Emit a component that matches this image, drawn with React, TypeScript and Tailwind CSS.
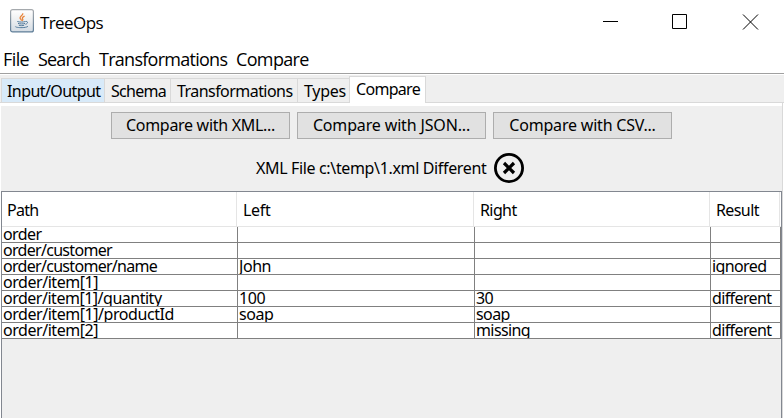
import React from 'react';

const rows = [
  { cells: ['order', '', '', ''], tracking: 'tracking-[-0.6px]' },
  { cells: ['order/customer', '', '', ''], tracking: 'tracking-[-0.7px]' },
  { cells: ['order/customer/name', 'John', '', 'ignored'], tracking: 'tracking-[-0.7px]' },
  { cells: ['order/item[1]', '', '', ''], tracking: 'tracking-[-0.45px]' },
  { cells: ['order/item[1]/quantity', '100', '30', 'different'], tracking: 'tracking-[-0.49px]' },
  { cells: ['order/item[1]/productId', 'soap', 'soap', ''], tracking: 'tracking-[-0.45px]' },
  { cells: ['order/item[2]', '', 'missing', 'different'], tracking: 'tracking-[-0.45px]' },
];

const columnTracking = ['', 'tracking-[-0.45px]', 'tracking-[-0.6px]', 'tracking-[-0.62px]'];

const grid = 'grid grid-cols-[236px_237px_236px_70px]';

function JavaIcon() {
  return (
    <svg width="24" height="24" viewBox="0 0 24 24" fill="none">
      <defs>
        <linearGradient id="face" x1="0" y1="0" x2="0" y2="1">
          <stop offset="0" stopColor="#ffffff" />
          <stop offset="0.5" stopColor="#eceef0" />
          <stop offset="1" stopColor="#d3dbe3" />
        </linearGradient>
        <linearGradient id="rim" x1="0" y1="0" x2="0" y2="1">
          <stop offset="0" stopColor="#a5a9ad" />
          <stop offset="1" stopColor="#5e7d98" />
        </linearGradient>
      </defs>
      <rect x="0.6" y="0.6" width="22.8" height="22.3" rx="2" fill="url(#face)" stroke="url(#rim)" strokeWidth="1.2" />
      <path d="M12.7 4.2c1 2-3.4 3.2-2.6 5 .3.8 1.3 1.3 1.5 2.5M14.6 7.2c-1.8.8-2.8 1.7-2 2.7.5.7.3 1.2-.3 1.8" stroke="#e8833a" strokeWidth="1.3" />
      <path d="M7.3 12.5c2 .8 6.2.7 8.3 0M8 14.4c2 .7 5.2.7 7 0M8.8 16.2c1.7.6 4 .6 5.4 0M15.8 12.5c2.5-.5 2.2 2.3-.4 2.8M5.5 17.5c-1 1 9.3 2 12.4-.1" stroke="#527a9b" strokeWidth="1" />
    </svg>
  );
}

function Tab({ label, className }: { label: string; className: string }) {
  return (
    <div className={`mt-[3px] h-[24px] border-t border-r border-[#d9d9d9] text-[16px] leading-[24px] ${className}`}>
      {label}
    </div>
  );
}

function CompareButton({ label, className }: { label: string; className: string }) {
  return (
    <button className={`h-[27px] border border-[#adadad] bg-[#e1e1e1] text-center leading-[23px] ${className}`}>
      {label}
    </button>
  );
}

export default function App() {
  return (
    <div className="flex h-[418px] w-[784px] flex-col overflow-hidden bg-white font-['Noto_Sans',sans-serif] text-[16px] whitespace-nowrap text-black">
      <header className="flex h-[44px] shrink-0 items-start">
        <div className="pt-[9px] pl-[10px]">
          <JavaIcon />
        </div>
        <span className="ml-[6px] pt-[11px] font-['Open_Sans',sans-serif] text-[17px] leading-[24px] tracking-[-0.6px]">TreeOps</span>
        <svg className="mt-[14px] ml-auto mr-[25px]" width="156" height="16" fill="none" stroke="#000">
          <path d="M0 7.5h15M69.5.5h14v14h-14zM140 .5l15 15M155 .5l-15 15" />
        </svg>
      </header>

      <nav className="flex h-[30px] shrink-0 border-b border-[#a0a0a0] pl-[3px] font-['Open_Sans',sans-serif] text-[18px] leading-[31px]">
        <span className="w-[35px] tracking-[-0.6px]">File</span>
        <span className="w-[61px] tracking-[-0.85px]">Search</span>
        <span className="w-[137px] tracking-[-0.73px]">Transformations</span>
        <span className="tracking-[-0.65px]">Compare</span>
      </nav>

      <div className="mt-px flex h-[28px] shrink-0 border-b border-[#d9d9d9] bg-[#efefef] pl-px">
        <Tab label="Input/Output" className="w-[104px] border-l bg-[#d8eaf9] pl-[5px] tracking-[-0.58px]" />
        <Tab label="Schema" className="w-[66px] pl-[6px] tracking-[-0.7px]" />
        <Tab label="Transformations" className="w-[127px] pl-[6px] tracking-[-0.55px]" />
        <Tab label="Types" className="w-[51px] border-r-0 pl-[6px] tracking-[-0.3px]" />
        <div className="mt-px h-[27px] w-[77px] border border-b-0 border-[#d9d9d9] bg-white pl-[6px] leading-[25px] tracking-[-0.7px]">
          <div className="-ml-[6px] h-[27px] bg-white pl-[6px]">Compare</div>
        </div>
      </div>

      <main className="mr-px flex min-h-0 grow flex-col border-r border-l border-r-[#d9d9d9] border-l-white pt-[3px]">
        <div className="flex min-h-0 grow flex-col bg-[#efefef]">
          <div className="flex shrink-0 gap-[7px] pt-[6px] pl-[110px]">
            <CompareButton label="Compare with XML..." className="w-[179px] tracking-[-0.3px]" />
            <CompareButton label="Compare with JSON..." className="w-[189px] tracking-[-0.15px]" />
            <CompareButton label="Compare with CSV..." className="w-[179px] tracking-[-0.2px]" />
          </div>
          <div className="mt-[14px] flex h-[30px] shrink-0 pl-[255px]">
            <span className="w-[238px] leading-[30px] tracking-[-0.35px]">XML File c:\temp\1.xml Different</span>
            <svg width="30" height="30" fill="none" stroke="#000">
              <circle cx="15" cy="15" r="13.6" strokeWidth="2.8" />
              <path d="M10 10l10 10M20 10L10 20" strokeWidth="3.2" />
            </svg>
          </div>
          <section className="mt-[8px] flex w-[781px] grow flex-col border-x border-t border-[#828790]">
            <div className={`${grid} h-[35px] shrink-0 border-b border-[#e5e5e5] bg-white leading-[36px] tracking-[-0.6px]`}>
              <div className="mr-px border-r border-[#e5e5e5] pl-[5px] tracking-[-0.75px]">Path</div>
              <div className="mr-px border-r border-[#e5e5e5] pl-[5px] tracking-[-0.3px]">Left</div>
              <div className="mr-px border-r border-[#e5e5e5] pl-[5px]">Right</div>
              <div className="mr-px border-r border-[#e5e5e5] pl-[5px]">Result</div>
            </div>
            {rows.map((row, i) => (
              <div key={i} className={`${grid} h-[16px] shrink-0 bg-white leading-[14px]`}>
                {row.cells.map((cell, j) => (
                  <div key={j} className={`h-[16px] overflow-hidden border-r border-b border-[#808080] pl-px ${j === 0 ? row.tracking : columnTracking[j]}`}>
                    {cell}
                  </div>
                ))}
              </div>
            ))}
          </section>
        </div>
      </main>
    </div>
  );
}
